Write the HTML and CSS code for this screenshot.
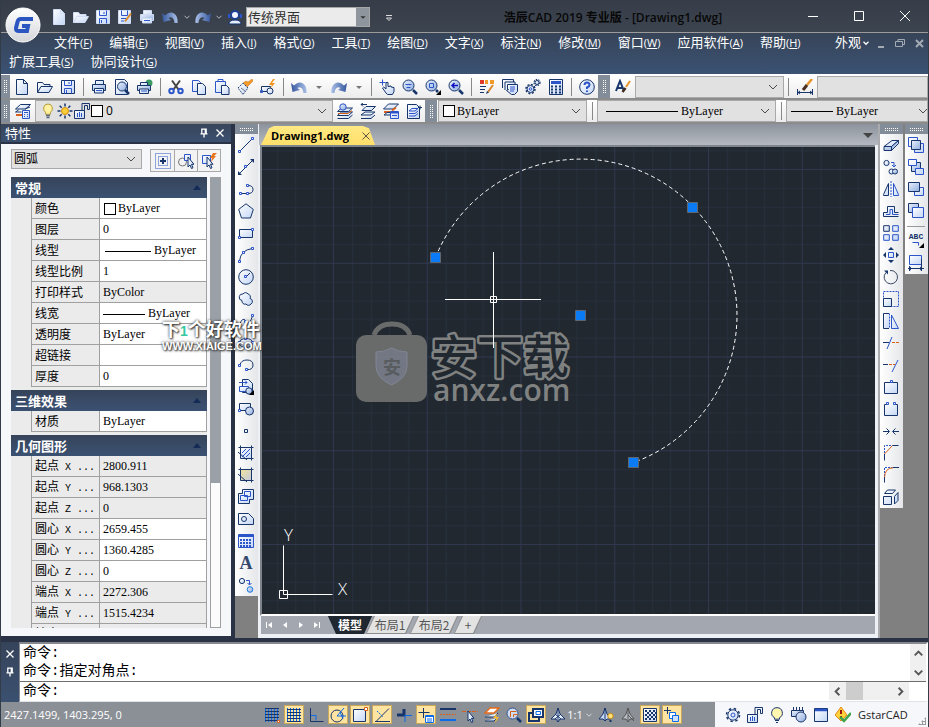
FILE: index.html
```html
<!DOCTYPE html>
<html lang="zh-CN">
<head>
<meta charset="utf-8">
<title>浩辰CAD 2019 专业版</title>
<link rel="stylesheet" href="styles.css">
</head>
<body>
<svg class="sprite" aria-hidden="true">
  <defs>
    <linearGradient id="paper" x1="0" y1="0" x2="1" y2="1"><stop offset="0" stop-color="#fff"/><stop offset="1" stop-color="#c3d6f5"/></linearGradient>
    <linearGradient id="deep" x1="0" y1="0" x2="1" y2="1"><stop offset="0" stop-color="#eaf1fc"/><stop offset="1" stop-color="#8fadde"/></linearGradient>
    <linearGradient id="bend" x1="0" y1="0" x2="1" y2="0"><stop offset="0" stop-color="#35579f"/><stop offset="1" stop-color="#a9bfe6"/></linearGradient>
    <linearGradient id="dneb" x1="1" y1="0" x2="0" y2="0"><stop offset="0" stop-color="#35579f"/><stop offset="1" stop-color="#a9bfe6"/></linearGradient>
    <linearGradient id="gold" x1="0" y1="0" x2="1" y2="1"><stop offset="0" stop-color="#f2e29a"/><stop offset="1" stop-color="#c3cbe0"/></linearGradient>
    <linearGradient id="silver" x1="0" y1="0" x2="0" y2="1"><stop offset="0" stop-color="#fff"/><stop offset="1" stop-color="#d4d6da"/></linearGradient>
  </defs>
  <!-- file and edit -->
  <symbol id="new" viewBox="0 0 16 16"><path class="p" d="M2.500.5h7l4 4v11h-11z"/><path d="M9.500.5v4h4"/></symbol>
  <symbol id="open" viewBox="0 0 16 16"><path class="p" d="M.5 13.500v-10h5l1.500 2h6v3"/><path class="p" d="M.5 13.500l3.500-6h11.500l-3.500 6z"/></symbol>
  <symbol id="save" viewBox="0 0 16 16"><path class="p" d="M1.500 1.500h13v13h-13z"/><path class="b" d="M4.500 1.500v5h7v-5M4.500 14.500v-5h7v5M9 3v2M6.500 11v3"/></symbol>
  <symbol id="saveas" viewBox="0 0 16 16"><path class="p" d="M1.500 1.500h12v13h-12z"/><path class="b" d="M4.500 1.500v5h6v-5M4 9.500h5M4 12h3"/><path class="tan" d="M14 4.500l-6 8"/><path class="s" d="M6.500 15l.5-3 2 1.500z"/></symbol>
  <symbol id="print" viewBox="0 0 16 16"><path class="p" d="M4.500 6v-4.500h8v4.500"/><path class="d" d="M1.500 5.500h13v6h-13z"/><path class="p" d="M3.500 9.500h9v4.500h-9z"/><path class="b" d="M5 11.500h6"/></symbol>
  <symbol id="publish" viewBox="0 0 16 16"><circle cx="12" cy="4" r="3.500" fill="#3c9b62" stroke="none"/><path class="p" d="M3.500 7v-3.500h7v3.500"/><path class="d" d="M.5 6.500h13v5h-13z"/><path class="p" d="M2.500 10h9v4.500h-9z"/><path class="b" d="M4 12h6"/></symbol>
  <symbol id="preview" viewBox="0 0 16 16"><path class="p" d="M1.500.5h9l3 3v12h-12z"/><circle class="d" cx="8" cy="7.500" r="4.500"/><path class="w3" d="M11 11l4 4"/></symbol>
  <symbol id="cut" viewBox="0 0 16 16"><path stroke="#444" stroke-width="2" d="M4 1.500l6.500 9M12 1.500l-6.500 9"/><g class="b w2"><circle cx="3.500" cy="12" r="2.200"/><circle cx="12.500" cy="12" r="2.200"/></g></symbol>
  <symbol id="copy" viewBox="0 0 16 16"><path class="p b" d="M1.500 1.500h6l2 2v9h-8z"/><path class="p" d="M6.500 4.500h5l3 3v8h-8z"/></symbol>
  <symbol id="paste" viewBox="0 0 16 16"><path class="p b" d="M1.500 2.500h10v11h-10z"/><path class="b" d="M4 2.500v-2h5v2z"/><path class="p" d="M7.500 6.500h5l2.500 2.500v6.500h-7.500z"/></symbol>
  <symbol id="brush" viewBox="0 0 16 16"><path d="M15 0l1 2-6 6-4-4 3-2 2 1z" fill="#f39b2c" stroke="#c46a10" stroke-width=".5"/><path class="p" d="M1 9l5-5 5 5-5 6.500z" stroke-dasharray="1.500 1"/><path d="M4 9l4 3" stroke="#777"/></symbol>
  <symbol id="bedit" viewBox="0 0 16 16"><path class="p" d="M1.500 7.500h9v5h-9z"/><circle class="p" cx="10" cy="12" r="3"/><path class="b" d="M.5 11.500h2v2h-2z"/><path fill="#f2941d" stroke="none" d="M13 0l-4 6h3l-2 4 5-6h-3l3-4z"/></symbol>
  <symbol id="undo" viewBox="0 0 16 16"><path d="M0 4l1.500 9 7.500-2-2.500-2c3-2 5.500 0 6 5h3c1-9-6-14-12.500-7.500z" fill="url(#bend)" stroke="none"/></symbol>
  <symbol id="redo" viewBox="0 0 16 16"><path d="M16 4l-1.500 9-7.500-2 2.500-2c-3-2-5.500 0-6 5h-3c-1-9 6-14 12.500-7.500z" fill="url(#dneb)" stroke="none"/></symbol>
  <symbol id="support" viewBox="0 0 16 16"><circle cx="8" cy="6" r="4" fill="#f4f7ff" stroke="#1f3f94" stroke-width="2"/><path class="sb" d="M1 5h2v4h-2zM13 5h2v4h-2z"/><path d="M2 15q0-4 6-4t6 4z" fill="#e5edfc" stroke="#10306e"/></symbol>
  <!-- view -->
  <symbol id="pan" viewBox="0 0 16 16"><path class="b" d="M3.500.5v6M.5 3.500h6"/><path class="p" d="M7 14l-3.500-5 1.200-1 2.300 2v-6.500h2v4h1.500v-.5h1.500v1h1.500v.5h1.500v4l-1.500 3h-5z"/></symbol>
  <symbol id="zoomrt" viewBox="0 0 16 16"><circle class="d" cx="6.500" cy="6.500" r="5.500"/><path class="b" d="M3.500 5.500h6M4.500 8.500h4"/><path class="w3" d="M11 11l4 4"/></symbol>
  <symbol id="zoomwin" viewBox="0 0 16 16"><circle class="d" cx="6.500" cy="6.500" r="5.500"/><path class="b" d="M4.500 4.500h4v4h-4z"/><path class="w3" d="M11 11l2 2"/><path fill="#000" stroke="none" d="M16 11v5h-5z"/></symbol>
  <symbol id="zoomprev" viewBox="0 0 16 16"><circle class="d" cx="6.500" cy="6.500" r="5.500"/><path stroke="#1010c0" stroke-width="1.500" d="M10 6.500h-6M6.500 4l-2.500 2.500 2.500 2.500"/><path class="w3" d="M11 11l4 4"/></symbol>
  <symbol id="palette" viewBox="0 0 16 16"><path fill="#e03a2a" stroke="none" d="M1 1h4v4h-4z"/><path fill="#f09b2c" stroke="none" d="M6 1h3v4h-3zM11 1h4v4h-4z"/><path d="M1 7.500h6M1 10.500h5M1 13.500h4"/><path class="tan" d="M14 6l-5 7"/><path class="s" d="M7 15l1-3 2 1.500z"/></symbol>
  <symbol id="sheets" viewBox="0 0 16 16"><path class="p" d="M.5 9v-8.500h11v3"/><path class="p" d="M3 11v-8h10v3"/><path class="p" d="M5.500 5.500h10v7l-3 3h-3l-5-4 2-1h-1z"/><path class="b" d="M8 8h5M8 10h5M8 12h4"/></symbol>
  <symbol id="gears" viewBox="0 0 16 16"><circle cx="5.500" cy="10" r="4.500" stroke-width="1.500" stroke-dasharray="2 1.500"/><circle class="p" cx="5.500" cy="10" r="3.500"/><circle class="b" cx="5.500" cy="10" r="1.300"/><circle cx="12" cy="3.500" r="3" stroke-width="1.200" stroke-dasharray="1.500 1"/><circle class="p" cx="12" cy="3.500" r="2"/></symbol>
  <symbol id="calc" viewBox="0 0 16 16"><path class="p" d="M1.500.5h13v15h-13z"/><path class="sb" d="M3 2h10v3h-10z"/><path d="M3 7.500h10M3 10.500h10M3 13.500h10" stroke-width="2" stroke-dasharray="2 2"/></symbol>
  <symbol id="help" viewBox="0 0 16 16"><circle class="p" cx="8" cy="8" r="7.300"/><path class="b w2" d="M5.500 6q0-2.500 2.500-2.500t2.500 2.500q0 1.500-2.500 2.500v1.500M8 11.500v1.500"/></symbol>
  <symbol id="tstyle" viewBox="0 0 16 16"><path class="w2" d="M1 12l4-10 4 10M2.500 9h5"/><path stroke="#e7962e" stroke-width="2" d="M15 2l-4 6"/><path stroke="#3d2b20" stroke-width="2.500" d="M10.500 9l-3 4"/></symbol>
  <symbol id="dstyle" viewBox="0 0 16 16"><path stroke="#e7962e" stroke-width="2.500" d="M15 0l-5 6"/><path stroke="#4a3020" stroke-width="3" d="M10 6l-4 5"/><path d="M.5 10v6M15.500 10v6M.5 13.500h15M3 12l-2 1.500 2 1.500M13 12l2 1.500-2 1.500"/></symbol>
  <!-- layers -->
  <symbol id="layers" viewBox="0 0 16 16"><path class="p" d="M.5 6l5-4.500h10l-5 4.500z"/><path d="M.5 9l3-2M.5 9h6M10 6l5-2"/><path class="o w2" d="M1 12h6"/><path class="p b" d="M7.500 7.500h7v8h-7z"/><path class="b" d="M9 9.500h4M9 11.500h1M12 11.500h1M9 13.500h1M12 13.500h1"/></symbol>
  <symbol id="laycur" viewBox="0 0 16 16"><path class="p" d="M.5 12.500l4-3.500h11l-4 3.500zM.5 15.500h11l4-3.500"/><path class="p" d="M.5 8.500l4-3.500h11l-4 3.500z"/><path class="o" d="M1 10.500h10l4-3"/><circle class="d b" cx="6" cy="4" r="3.200"/></symbol>
  <symbol id="layprev" viewBox="0 0 16 16"><path class="p" d="M1 12l4-3h10l-4 3zM1 15.500h10l4-3.500"/><path class="p" d="M2 7.500l4-4h9.500l-4 4z"/><path d="M7 1.500h-6M3 0l-2 1.500 2 2"/></symbol>
  <symbol id="laystate" viewBox="0 0 16 16"><path class="p" d="M.5 6l5-5h10l-5 5z"/><path class="o w2" d="M1 9h7M9 7.500l4-3"/><path class="p" d="M1 12l3-2.500h5v2.500z"/><path class="p b" d="M7.500 8.500h8v7h-8z"/><path class="b w2" d="M8 9.500h7"/><path class="b" d="M9 12.500h5"/></symbol>
  <symbol id="laywalk" viewBox="0 0 16 16"><path class="p" d="M1.500 1.500h9l3 3v11h-12z"/><path class="p b" d="M3 8l3-2.500h6l-3 2.500zM3 10.500h6l3-2.500M3 13h6l3-2.500"/><path d="M12 4.500h4M14 2.500v4"/></symbol>
  <symbol id="bulb" viewBox="0 0 16 16"><path d="M8 1a4.500 4.500 0 0 1 2.500 8.200v2h-5v-2a4.500 4.500 0 0 1 2.500-8.200z" fill="#fff2a0" stroke="#b39a3a"/><path d="M6 12.500h4M6.500 14.500h3" stroke="#5a6478" stroke-width="1.500"/></symbol>
  <symbol id="sun" viewBox="0 0 16 16"><path d="M8 .5v3M8 12.500v3M.5 8h3M12.500 8h3M2.700 2.700l2 2M11.300 11.300l2 2M13.300 2.700l-2 2M4.700 11.300l-2 2" stroke-width="1.500"/><circle cx="8" cy="8" r="3.500" fill="#f7cf3a" stroke="#d58d10"/></symbol>
  <symbol id="unlock" viewBox="0 0 16 16"><path class="p" d="M.5 7.500h10v8h-10z"/><path class="b" d="M3.500 10v4M5.500 9v5M7.500 10v4"/><path d="M8 7.500v-7h7.500v6h-2v-4h-3v5"/></symbol>
  <!-- draw -->
  <symbol id="line" viewBox="0 0 16 16"><path d="M2 14l12-12"/><path class="h" d="M.5 13.500h2v2h-2zM13.500.5h2v2h-2z"/></symbol>
  <symbol id="xline" viewBox="0 0 16 16"><path d="M1 15l14-14"/><path class="s" d="M0 16v-4l4 4zM16 0v4l-4-4z"/><path class="h" d="M6.500 6.500h2v2h-2z"/></symbol>
  <symbol id="pline" viewBox="0 0 16 16"><path d="M3 12.500h6M10 4.500q5 0 5 4t-5 4"/><path class="h" d="M1.500 11.500h2v2h-2zM8.500 11.500h2v2h-2zM8.500 3.500h2v2h-2z"/></symbol>
  <symbol id="polygon" viewBox="0 0 16 16"><path class="p" d="M8 .8l7.300 5.600-2.800 8.600h-9l-2.800-8.600z"/></symbol>
  <symbol id="rect" viewBox="0 0 16 16"><path class="p" d="M1.500 4.500h13v8h-13z"/><path class="h" d="M.5 11.500h2v2h-2zM13.500 3.500h2v2h-2z"/></symbol>
  <symbol id="arc" viewBox="0 0 16 16"><path d="M1.500 14q1-11 13-12.500"/><path class="h" d="M.5 13.500h2v2h-2zM4.500 4.500h2v2h-2zM13.500.5h2v2h-2z"/></symbol>
  <symbol id="circle" viewBox="0 0 16 16"><circle class="p" cx="8" cy="8" r="7.300"/><path d="M8 8l4-4"/><path class="h" d="M6.500 6.500h2v2h-2z"/></symbol>
  <symbol id="cloud" viewBox="0 0 16 16"><path class="p" d="M5 3a3 3 0 0 1 5 0 3 3 0 0 1 2 4.500 3 3 0 0 1 1 5.500 3 3 0 0 1-5 0 3 3 0 0 1-4-3.500 3 3 0 1 1 1-6.500z"/></symbol>
  <symbol id="spline" viewBox="0 0 16 16"><path d="M1.500 12q3-9 6.500-4t6.500-5"/><path class="h" d="M.5 12.500h2v2h-2zM6.500 7.500h2v2h-2zM13.500 1.500h2v2h-2z"/></symbol>
  <symbol id="ellipse" viewBox="0 0 16 16"><ellipse class="p" cx="8" cy="8" rx="7" ry="4.500"/><path class="h" d="M6.500 2.500h2v2h-2zM.5 6.500h2v2h-2zM13.500 6.500h2v2h-2zM6.500 11.500h2v2h-2z"/></symbol>
  <symbol id="earc" viewBox="0 0 16 16"><path d="M2 8q1-5 7-5t6 5-6 4.500"/><path class="h" d="M.5 7.500h2v2h-2zM7.500 11.500h2v2h-2z"/></symbol>
  <symbol id="insert" viewBox="0 0 16 16"><path class="p" d="M4.500.5h6l4 4v9h-10z"/><path class="b" d="M1 3.500h8M7 1.500l2 2-2 2"/><path class="p b" d="M1.500 7.500h9v5h-9z"/><circle class="d" cx="11" cy="12" r="3.200"/><path fill="#000" stroke="none" d="M16 11v5h-5z"/></symbol>
  <symbol id="block" viewBox="0 0 16 16"><path class="p" d="M1.500 2.500h11v7h-11z"/><circle class="d" cx="11.500" cy="10" r="4"/><path class="h" d="M.5 8.500h2v2h-2z"/></symbol>
  <symbol id="point" viewBox="0 0 16 16"><path d="M6.500 6.500h3v3h-3z"/></symbol>
  <symbol id="hatch" viewBox="0 0 16 16"><path class="p" d="M2.500 2.500h11v11h-11z"/><path class="b" d="M4 8l4-4M4 12l8-8M8 12l4-4"/><path d="M.5 2.500h2v-2M15.500 2.500h-2v-2M13.500 15.500v-2h2M0 7l9 8"/></symbol>
  <symbol id="gradient" viewBox="0 0 16 16"><path fill="url(#gold)" d="M2.500 2.500h11v11h-11z"/><path d="M.5 2.500h2v-2M15.500 2.500h-2v-2M13.500 15.500v-2h2M0 7l9 8"/></symbol>
  <symbol id="region" viewBox="0 0 16 16"><path class="p" d="M.5 4.500h4v-4h11v10h-4v4h-11z"/><path class="b" d="M2.500 6.500h7v5h-7zM6.500 2.500h6v5h-6z"/></symbol>
  <symbol id="wipeout" viewBox="0 0 16 16"><path class="p" d="M.5 2.500h10l5 5v6h-15z"/><circle class="p" cx="6" cy="8" r="2.500"/></symbol>
  <symbol id="table" viewBox="0 0 16 16"><path class="p b" d="M.5 1.500h15v13h-15z"/><path class="sb" d="M1 1h14v3h-14z"/><path class="b w2" d="M2 7h12M2 10h12M2 13h12" stroke-dasharray="2 1"/></symbol>
  <symbol id="addsel" viewBox="0 0 16 16"><circle class="p" cx="4" cy="4" r="2.600"/><path class="b" d="M8 3.500h3.500v4M9.500 6l2 2 2-2"/><circle class="d" cx="12" cy="12.500" r="2.800" stroke="#1a78e0"/></symbol>
  <!-- modify -->
  <symbol id="erase" viewBox="0 0 16 16"><path class="p" d="M1 9.500l8-6h6.500l-7 6z"/><path class="d" d="M1 9.500h7.500v4h-7.500zM8.500 9.500l7-6v3l-7 7z"/></symbol>
  <symbol id="copyobj" viewBox="0 0 16 16"><circle class="p" cx="3.500" cy="4" r="2.600"/><path class="b" d="M8 3.500h3v4M9 6l2 2 2-2"/><circle class="p" cx="8.500" cy="12.500" r="2.500"/><circle class="d" cx="12" cy="12.500" r="2.500"/></symbol>
  <symbol id="mirror" viewBox="0 0 16 16"><path class="p" d="M.5 14.500v-1l5-11v12z"/><path class="p b" d="M15.500 14.500v-1l-5-11v12z"/><path class="b" d="M8 0v16" stroke-dasharray="2 1"/></symbol>
  <symbol id="offset" viewBox="0 0 16 16"><path class="p" d="M.5 13.500v-4h4v-6h7v6h4M.5 13.500h15"/><path class="b" d="M3 11.500h4v-5h2.500v5h6"/></symbol>
  <symbol id="array" viewBox="0 0 16 16"><path class="p" d="M.7.700h5.600v5.600h-5.600z"/><path class="p b" d="M9.700.700h5.600v5.600h-5.600zM.7 9.700h5.600v5.600h-5.600zM9.700 9.700h5.600v5.600h-5.600z"/></symbol>
  <symbol id="move" viewBox="0 0 16 16"><path class="p b" d="M5.500 5.500h5v5h-5z"/><path class="s" d="M8 0l3 3h-6zM8 16l3-3h-6zM0 8l3-3v6zM16 8l-3-3v6z"/></symbol>
  <symbol id="rotate" viewBox="0 0 16 16"><path d="M3 3.500a6.700 6.700 0 1 0 4-2" stroke="#3c4a66"/><path class="s" d="M1 1.500h4v4z"/></symbol>
  <symbol id="scale" viewBox="0 0 16 16"><path class="b" d="M.5.500h15v15h-15z" stroke-dasharray="2 1"/><path class="p" d="M.5 7.500h8v8h-8z"/></symbol>
  <symbol id="stretch" viewBox="0 0 16 16"><path class="p" d="M6 15.500h-5.500v-15h5.500"/><path class="b" d="M6.500.500v15" stroke-dasharray="2 1"/><path class="p b" d="M8.500 2v13.500h7z"/></symbol>
  <symbol id="trim" viewBox="0 0 16 16"><path class="b" d="M4 14l5-12"/><path d="M0 7.500h6"/><path class="o" d="M9 7.500h7" stroke-dasharray="3 1"/></symbol>
  <symbol id="extend" viewBox="0 0 16 16"><path class="b" d="M9 15l6-12"/><path d="M0 7.500h5"/><path class="o" d="M6 7.500h6" stroke-dasharray="3 1"/></symbol>
  <symbol id="breakpt" viewBox="0 0 16 16"><path class="p" d="M1.500 3.500h13v11h-13z"/><path class="h" d="M7.500 1.500h2v2h-2z"/></symbol>
  <symbol id="break" viewBox="0 0 16 16"><path class="p" d="M4 3.500h-2.500v11h13v-11h-2"/><path class="h" d="M3.500 1.500h2v2h-2zM10.500 1.500h2v2h-2z"/></symbol>
  <symbol id="join" viewBox="0 0 16 16"><path d="M0 8.500h6M3.500 5.500l3 3-3 3M16 8.500h-6M12.500 5.500l-3 3 3 3"/></symbol>
  <symbol id="chamfer" viewBox="0 0 16 16"><path class="b" d="M1.500 8v-7.500h8" stroke-dasharray="2 1"/><path class="o" d="M1.500 9l8-8.500"/><path d="M1.500 9v6.500M9.500.500h6"/></symbol>
  <symbol id="fillet" viewBox="0 0 16 16"><path class="b" d="M1.500 9v-8.500h8" stroke-dasharray="2 1"/><path class="o" d="M1.500 11q0-10 9-10.300"/><path d="M1.500 10v5.500M10 .5h6"/></symbol>
  <symbol id="explode" viewBox="0 0 16 16"><path class="p" d="M.5 7.500h8v8h-8zM1.500 4.500l3-3.500h8l-3 3.500zM11.500 7.500l3.500-4v8l-3.500 3.500z"/></symbol>
  <!-- draw order -->
  <symbol id="front" viewBox="0 0 16 16"><path class="p b" d="M.5.500h9v9h-9zM6.500 6.500h9v9h-9z"/><path class="d" d="M3.500 3.500h9v9h-9z"/></symbol>
  <symbol id="back" viewBox="0 0 16 16"><path class="d" d="M3.500 3.500h9v9h-9z"/><path class="p b" d="M.5.500h8v6h-8zM7.500 9.500h8v6h-8z"/></symbol>
  <symbol id="above" viewBox="0 0 16 16"><path class="p b" d="M6.500 6.500h9v8h-9z"/><path class="d" d="M.5 1.500h11v9h-11z"/></symbol>
  <symbol id="below" viewBox="0 0 16 16"><path class="d" d="M.5.500h10v9h-10z"/><path class="p b" d="M4.500 4.500h11v10h-11z"/></symbol>
  <symbol id="annoback" viewBox="0 0 16 16"><path class="p b" d="M1.500.5h12v9h-12z"/><path d="M1.500 11v5M13.500 4v12M0 13.500h16M3 12l-2 1.500 2 1.500M12 12l2 1.500-2 1.500"/></symbol>
  <!-- selection -->
  <symbol id="qselect" viewBox="0 0 16 16"><path class="b" d="M.5.500h15v15h-15zM3.500 3.500h9v9h-9z" stroke-dasharray="1 1"/><path class="w2" d="M8 5v6M5 8h6"/></symbol>
  <symbol id="selobj" viewBox="0 0 16 16"><circle cx="4.500" cy="9" r="4" stroke="#777"/><path class="p b" d="M6.500 1.500h6v6h-6z"/><path class="p" d="M10 4v10l2-2 1.500 3.500 1.500-.7-1.500-3.500h2.500z"/></symbol>
  <symbol id="pickadd" viewBox="0 0 16 16"><path class="p b" d="M1.500 2.500h8v8h-8z"/><path class="p" d="M6 4v10l2-2 1.500 3.500 1.500-.7-1.500-3.500h2.500z"/><path fill="#e8741d" stroke="none" d="M12 0l-3 5h2l-1 4 5-6h-2l3-3z"/></symbol>
  <!-- status -->
  <symbol id="snap" viewBox="0 0 16 16"><path d="M1.500 1v14M4.500 1v14M7.500 1v14M10.500 1v14M13.500 1v14" stroke="#0a6bea"/><path d="M1 1.500h14M1 4.500h14M1 7.500h14M1 10.500h14M1 13.500h14"/><path class="o" d="M13.500 13.500h2v2h-2z" fill="#fff"/></symbol>
  <symbol id="grid" viewBox="0 0 16 16"><path d="M1.500 1v14M4.500 1v14M7.500 1v14M10.500 1v14M13.500 1v14" stroke="#0a6bea"/><path d="M1 2.500h14M1 5.500h14M1 8.500h14M1 11.500h14M1 14.500h14"/></symbol>
  <symbol id="ortho" viewBox="0 0 16 16"><path d="M2.500 1v13.500h13"/><path stroke="#0a6bea" d="M3 8.500h5v5"/></symbol>
  <symbol id="polar" viewBox="0 0 16 16"><circle cx="7" cy="9" r="6"/><path d="M7 9l7-8M7 9h9M10 5l3 7" stroke="#0a6bea"/></symbol>
  <symbol id="osnap" viewBox="0 0 16 16"><path class="p" d="M1.500 2.500h12v12h-12z"/><path class="o" d="M12.500.5h3v3h-3z" fill="#fff"/></symbol>
  <symbol id="otrack" viewBox="0 0 16 16"><path d="M2 14.500l13-13M1 14.500h15"/><path d="M3 4l6 6" stroke="#0a6bea" stroke-dasharray="2 1"/></symbol>
  <symbol id="ducs" viewBox="0 0 16 16"><path d="M1 8h7v-6" stroke-width="3"/><path d="M9 8v7M9 8.500h7" stroke="#0a6bea"/></symbol>
  <symbol id="dyn" viewBox="0 0 16 16"><path d="M5.500 1v10M.5 5.500h11"/><path d="M7.500 8.500h8v7h-8z" fill="#fff" stroke="#0a6bea"/><path d="M7.500 9.500h8M9 12h5M9 14h5" stroke="#0a6bea"/></symbol>
  <symbol id="lweight" viewBox="0 0 16 16"><path d="M0 2h16" stroke-width="2"/><path class="o" d="M0 7.500h16" stroke-dasharray="2 1"/><path d="M0 13h16" stroke="#0a6bea" stroke-width="2"/></symbol>
  <symbol id="track" viewBox="0 0 16 16"><path class="o" d="M0 4.500h16" stroke-dasharray="4 1"/><path class="p" d="M6 4v10l2-2 1.500 3.500 1.500-.7-1.500-3.500h2.500z"/></symbol>
  <symbol id="quick" viewBox="0 0 16 16"><path d="M1 6l5-5h9l-5 5z" fill="#fff" stroke="#e36b1e" stroke-width="1.500"/><path class="p" d="M1 10h9l4-4M1 14h9l3-3"/><path d="M13 6l-4 5h3l-1 5 4-6h-3z" fill="#f7b92c" stroke="none"/></symbol>
  <symbol id="magn" viewBox="0 0 16 16"><circle cx="6.500" cy="6.500" r="5.500" fill="#cfdbef" stroke="#35528f"/><path class="o" d="M4.500 10v-5.500h6M7.500 10v-2.500h4"/><path class="w3" d="M11 11l4 4"/></symbol>
  <symbol id="model" viewBox="0 0 16 16"><path d="M5 2h10v8h-10z" fill="#fff" stroke-width="2"/><path stroke="#0a6bea" d="M8 4.500h4.500v3h-4.500z"/><path d="M5 6h-4v8h10v-4" stroke-width="2"/></symbol>
  <symbol id="anno" viewBox="0 0 16 16"><path d="M8 1l2 6 5 5h-5l-2 3-2-3h-5l5-5z" fill="#e8eefb"/><path d="M8 1v14M5 12l6-5M11 12l-6-5"/></symbol>
  <symbol id="annovis" viewBox="0 0 16 16"><path d="M7 1l2 6 4 5h-4l-2 2-2-2h-4l4-5z" fill="#c8d7f4"/><path d="M7 1v12"/><circle cx="12.500" cy="9" r="2.700" fill="#ffe27a" stroke="#c48a1a"/><path d="M11.500 14h2" stroke-width="2"/></symbol>
  <symbol id="annoauto" viewBox="0 0 16 16"><path d="M8 1l2 6 4 5h-4l-2 3-2-3h-4l4-5z" fill="#b7bbc2" stroke="#555"/><path d="M8 1v13M8 8l6 6" stroke="#555"/></symbol>
  <symbol id="checker" viewBox="0 0 16 16"><path class="p" d="M1.500 1.500h13v13h-13z"/><path d="M3 4h10M3 8h10M3 12h10" stroke-width="2" stroke-dasharray="2 2"/><path d="M5 6h9M5 10h9" stroke-width="2" stroke-dasharray="2 2"/></symbol>
  <symbol id="cycle" viewBox="0 0 16 16"><path d="M3.500 0v7M0 3.500h7"/><path d="M5.500 5.500h6v6h-6z" fill="#fff" stroke="#0a6bea"/><path d="M8.500 8.500h6v6h-6z" fill="#cfe0fb" stroke="#0a6bea"/></symbol>
  <symbol id="gear" viewBox="0 0 16 16"><circle cx="8" cy="8" r="6.500" stroke-width="1.500" stroke-dasharray="2.500 2.600"/><circle class="p" cx="8" cy="8" r="5.200"/><circle class="b" cx="8" cy="8" r="2"/></symbol>
  <symbol id="lamp" viewBox="0 0 16 16"><path d="M8 .7a5.300 5.300 0 0 1 2.500 10v1.500h-5v-1.500a5.300 5.300 0 0 1 2.500-10z" fill="#fff6b0"/><path d="M6 13.500h4M7 15.500h2"/></symbol>
  <symbol id="hw" viewBox="0 0 16 16"><path class="d" d="M.5 3.500h12v6h-12z"/><path d="M2.500 0v3M5.500 0v3M8.500 0v3M11.500 0v3"/><circle class="d" cx="10" cy="10" r="5"/></symbol>
  <symbol id="fullscr" viewBox="0 0 16 16"><path class="p" d="M1.500 1.500h13v13h-13z"/><path class="b w3" d="M2 3h12"/></symbol>
  <symbol id="warn" viewBox="0 0 16 16"><path d="M6 0l6 8-6 6-6-6z" fill="#ffd23c" stroke="#e8871c"/><path class="w2" d="M6 3v4M6 9v1" stroke="#9c1010"/><path d="M5 10l4 4 7-8" stroke="#3fa44a" stroke-width="2.500"/></symbol>
  <!-- chrome -->
  <symbol id="down" viewBox="0 0 16 16"><path d="M4 6l4 4 4-4"/></symbol>
  <symbol id="up" viewBox="0 0 16 16"><path d="M4 10l4-4 4 4"/></symbol>
  <symbol id="prev" viewBox="0 0 16 16"><path d="M10 4l-4 4 4 4"/></symbol>
  <symbol id="next" viewBox="0 0 16 16"><path d="M6 4l4 4-4 4"/></symbol>
  <symbol id="x" viewBox="0 0 16 16"><path d="M4 4l8 8M12 4l-8 8"/></symbol>
  <symbol id="pin" viewBox="0 0 16 16"><path d="M5.500 9v-5.500h5v5.500M4 9h8M8 9v4M9.500 3.500v5"/></symbol>
  <symbol id="caret" viewBox="0 0 16 16"><path fill="currentColor" stroke="none" d="M5 7h6l-3 3z"/></symbol>
</svg>

<div class="app">
  <a class="logo" href="#" aria-label="浩辰CAD">
    <svg viewBox="0 0 36 36"><circle cx="18" cy="18" r="17" fill="url(#silver)" stroke="#fff"/><path d="M28 12h-12q-3 0-3.500 3l-1.500 6q-.5 3 3 3h8l1-5h-6" fill="none" stroke="#2b55c0" stroke-width="4"/></svg>
  </a>
  <header class="title">
    <div class="quick">
      <button aria-label="新建"><svg class="i"><use href="#new"/></svg></button>
      <button aria-label="打开"><svg class="i"><use href="#open"/></svg></button>
      <button aria-label="保存"><svg class="i"><use href="#save"/></svg></button>
      <button aria-label="另存为"><svg class="i"><use href="#saveas"/></svg></button>
      <button aria-label="打印"><svg class="i"><use href="#print"/></svg></button>
      <button class="wide" aria-label="放弃"><svg class="i"><use href="#undo"/></svg></button>
      <button class="mini" aria-label="放弃列表"><svg class="i c"><use href="#down"/></svg></button>
      <button aria-label="重做"><svg class="i"><use href="#redo"/></svg></button>
      <button class="mini" aria-label="重做列表"><svg class="i c"><use href="#down"/></svg></button>
      <button aria-label="客服"><svg class="i"><use href="#support"/></svg></button>
    </div>
    <div class="workspace">
      <select aria-label="工作空间"><option>传统界面</option></select>
      <span class="drop"><svg class="i"><use href="#caret"/></svg></span>
    </div>
    <button class="more" aria-label="自定义"><svg viewBox="0 0 8 8"><path d="M1 1.500h6M1.500 4h5l-2.500 2.500z"/></svg></button>
    <h1>浩辰CAD 2019 专业版 - [Drawing1.dwg]</h1>
    <div class="winbtns">
      <button aria-label="最小化"><svg viewBox="0 0 16 16"><path d="M3 8.500h10"/></svg></button>
      <button aria-label="最大化"><svg viewBox="0 0 16 16"><path d="M3.500 3.500h9v9h-9z"/></svg></button>
      <button aria-label="关闭"><svg viewBox="0 0 16 16"><path d="M3 3l10 10M13 3l-10 10"/></svg></button>
    </div>
  </header>

  <nav class="menu">
    <div class="mrow first">
      <a href="#">文件<small>(<u>F</u>)</small></a>
      <a href="#">编辑<small>(<u>E</u>)</small></a>
      <a href="#">视图<small>(<u>V</u>)</small></a>
      <a href="#">插入<small>(<u>I</u>)</small></a>
      <a href="#">格式<small>(<u>O</u>)</small></a>
      <a href="#">工具<small>(<u>T</u>)</small></a>
      <a href="#">绘图<small>(<u>D</u>)</small></a>
      <a href="#">文字<small>(<u>X</u>)</small></a>
      <a href="#">标注<small>(<u>N</u>)</small></a>
      <a href="#">修改<small>(<u>M</u>)</small></a>
      <a href="#">窗口<small>(<u>W</u>)</small></a>
      <a href="#">应用软件<small>(<u>A</u>)</small></a>
      <a href="#">帮助<small>(<u>H</u>)</small></a>
      <span class="docbtns">
        <button class="look">外观<svg class="i"><use href="#down"/></svg></button>
        <button aria-label="最小化文档"><svg viewBox="0 0 16 16"><path d="M5 12h6"/></svg></button>
        <button aria-label="还原文档"><svg class="thin" viewBox="0 0 16 16"><path d="M3.500 6.500h7v5h-7zM6 6v-1.500h6.500v5h-2"/></svg></button>
        <button aria-label="关闭文档"><svg viewBox="0 0 16 16"><path d="M5 5l7 7M12 5l-7 7"/></svg></button>
      </span>
    </div>
    <div class="mrow">
      <a href="#">扩展工具<small>(<u>S</u>)</small></a>
      <a href="#">协同设计<small>(<u>G</u>)</small></a>
    </div>
  </nav>

  <div class="bar std">
    <span class="grip"></span>
    <button aria-label="新建"><svg class="i"><use href="#new"/></svg></button>
    <button aria-label="打开"><svg class="i"><use href="#open"/></svg></button>
    <button aria-label="保存"><svg class="i"><use href="#save"/></svg></button>
    <span class="sep"></span>
    <button aria-label="打印"><svg class="i"><use href="#print"/></svg></button>
    <button aria-label="打印预览"><svg class="i"><use href="#preview"/></svg></button>
    <button aria-label="发布"><svg class="i"><use href="#publish"/></svg></button>
    <span class="sep"></span>
    <button aria-label="剪切"><svg class="i"><use href="#cut"/></svg></button>
    <button aria-label="复制"><svg class="i"><use href="#copy"/></svg></button>
    <button aria-label="粘贴"><svg class="i"><use href="#paste"/></svg></button>
    <button aria-label="特性匹配"><svg class="i"><use href="#brush"/></svg></button>
    <button aria-label="块编辑器"><svg class="i"><use href="#bedit"/></svg></button>
    <span class="sep"></span>
    <button aria-label="放弃"><svg class="i"><use href="#undo"/></svg></button>
    <button class="mini" aria-label="放弃列表"><svg class="i"><use href="#caret"/></svg></button>
    <button aria-label="重做"><svg class="i"><use href="#redo"/></svg></button>
    <button class="mini" aria-label="重做列表"><svg class="i"><use href="#caret"/></svg></button>
    <span class="sep"></span>
    <button aria-label="平移"><svg class="i"><use href="#pan"/></svg></button>
    <button aria-label="实时缩放"><svg class="i"><use href="#zoomrt"/></svg></button>
    <button aria-label="窗口缩放"><svg class="i"><use href="#zoomwin"/></svg></button>
    <button aria-label="缩放上一个"><svg class="i"><use href="#zoomprev"/></svg></button>
    <span class="sep"></span>
    <button aria-label="特性"><svg class="i"><use href="#palette"/></svg></button>
    <button aria-label="图纸集"><svg class="i"><use href="#sheets"/></svg></button>
    <button aria-label="设置"><svg class="i"><use href="#gears"/></svg></button>
    <button aria-label="计算器"><svg class="i"><use href="#calc"/></svg></button>
    <span class="sep"></span>
    <button aria-label="帮助"><svg class="i"><use href="#help"/></svg></button>
    <span class="grip wide"></span>
    <button class="dim" aria-label="文字样式管理"><svg class="i"><use href="#tstyle"/></svg></button>
    <div class="combo c-text"><select aria-label="文字样式"><option></option></select><svg class="i v"><use href="#down"/></svg></div>
    <span class="sep"></span>
    <button class="dim" aria-label="标注样式管理"><svg class="i"><use href="#dstyle"/></svg></button>
    <div class="combo grow"><select aria-label="标注样式"><option></option></select></div>
  </div>

  <div class="bar props">
    <span class="grip"></span>
    <button class="dim" aria-label="图层特性"><svg class="i"><use href="#layers"/></svg></button>
    <div class="combo c-layer">
      <svg class="i"><use href="#bulb"/></svg><svg class="i"><use href="#sun"/></svg><svg class="i"><use href="#unlock"/></svg><span class="swatch"></span>
      <select aria-label="图层"><option>0</option></select><svg class="i v"><use href="#down"/></svg>
    </div>
    <button aria-label="置为当前"><svg class="i"><use href="#laycur"/></svg></button>
    <button aria-label="上一图层"><svg class="i"><use href="#layprev"/></svg></button>
    <button aria-label="图层状态"><svg class="i"><use href="#laystate"/></svg></button>
    <button aria-label="图层漫游"><svg class="i"><use href="#laywalk"/></svg></button>
    <span class="grip wide"></span>
    <div class="combo c-color"><span class="swatch"></span><select class="song" aria-label="颜色"><option>ByLayer</option></select><svg class="i v"><use href="#down"/></svg></div>
    <span class="sep"></span>
    <div class="combo c-ltype"><span class="rule"></span><select class="song" aria-label="线型"><option>ByLayer</option></select><svg class="i v"><use href="#down"/></svg></div>
    <span class="sep"></span>
    <div class="combo grow c-lw"><span class="rule short"></span><select class="song" aria-label="线宽"><option>ByLayer</option></select><svg class="i v"><use href="#down"/></svg></div>
  </div>

  <main class="work">
    <aside class="panel">
      <div class="phead"><h2>特性</h2><button aria-label="自动隐藏"><svg class="i"><use href="#pin"/></svg></button><button aria-label="关闭"><svg class="i"><use href="#x"/></svg></button></div>
      <div class="psel">
        <div class="combo"><select aria-label="对象类型"><option>圆弧</option></select><svg class="i v"><use href="#down"/></svg></div>
        <div class="ptools">
          <button aria-label="快速选择"><svg class="i"><use href="#qselect"/></svg></button>
          <button aria-label="选择对象"><svg class="i"><use href="#selobj"/></svg></button>
          <button aria-label="切换选择方式"><svg class="i"><use href="#pickadd"/></svg></button>
        </div>
      </div>
      <div class="plist">
        <div class="pscroll">
          <h3><button>常规<svg viewBox="0 0 8 5"><path d="M4 0l4 5h-8z"/></svg></button></h3>
          <table>
            <tr><th>颜色</th><td><span class="swatch"></span>ByLayer</td></tr>
            <tr><th>图层</th><td>0</td></tr>
            <tr><th>线型</th><td><span class="rule"></span>ByLayer</td></tr>
            <tr><th>线型比例</th><td>1</td></tr>
            <tr class="ro"><th>打印样式</th><td>ByColor</td></tr>
            <tr><th>线宽</th><td><span class="rule short"></span>ByLayer</td></tr>
            <tr><th>透明度</th><td>ByLayer</td></tr>
            <tr><th>超链接</th><td></td></tr>
            <tr><th>厚度</th><td>0</td></tr>
          </table>
          <h3><button>三维效果<svg viewBox="0 0 8 5"><path d="M4 0l4 5h-8z"/></svg></button></h3>
          <table>
            <tr><th>材质</th><td>ByLayer</td></tr>
          </table>
          <h3><button>几何图形<svg viewBox="0 0 8 5"><path d="M4 0l4 5h-8z"/></svg></button></h3>
          <table>
            <tr class="ro"><th>起点<span> X ...</span></th><td>2800.911</td></tr>
            <tr class="ro"><th>起点<span> Y ...</span></th><td>968.1303</td></tr>
            <tr class="ro"><th>起点<span> Z ...</span></th><td>0</td></tr>
            <tr><th>圆心<span> X ...</span></th><td>2659.455</td></tr>
            <tr><th>圆心<span> Y ...</span></th><td>1360.4285</td></tr>
            <tr><th>圆心<span> Z ...</span></th><td>0</td></tr>
            <tr class="ro"><th>端点<span> X ...</span></th><td>2272.306</td></tr>
            <tr class="ro"><th>端点<span> Y ...</span></th><td>1515.4234</td></tr>
            <tr class="ro"><th>端点<span> Z ...</span></th><td>0</td></tr>
          </table>
        </div>
        <div class="pbar"><div class="pthumb"></div></div>
      </div>
      <div class="wm-site" aria-hidden="true"><b>下<i>1</i>个好软件</b><span>WWW.XIAIGE.COM</span></div>
    </aside>

    <div class="vbar">
      <span class="hgrip"></span>
      <button aria-label="直线"><svg class="i"><use href="#line"/></svg></button>
      <button aria-label="构造线"><svg class="i"><use href="#xline"/></svg></button>
      <button aria-label="多段线"><svg class="i"><use href="#pline"/></svg></button>
      <button aria-label="正多边形"><svg class="i"><use href="#polygon"/></svg></button>
      <button aria-label="矩形"><svg class="i"><use href="#rect"/></svg></button>
      <button aria-label="圆弧"><svg class="i"><use href="#arc"/></svg></button>
      <button aria-label="圆"><svg class="i"><use href="#circle"/></svg></button>
      <button aria-label="修订云线"><svg class="i"><use href="#cloud"/></svg></button>
      <button aria-label="样条曲线"><svg class="i"><use href="#spline"/></svg></button>
      <button aria-label="椭圆"><svg class="i"><use href="#ellipse"/></svg></button>
      <button aria-label="椭圆弧"><svg class="i"><use href="#earc"/></svg></button>
      <button aria-label="插入块"><svg class="i"><use href="#insert"/></svg></button>
      <button aria-label="创建块"><svg class="i"><use href="#block"/></svg></button>
      <button aria-label="点"><svg class="i"><use href="#point"/></svg></button>
      <button aria-label="图案填充"><svg class="i"><use href="#hatch"/></svg></button>
      <button aria-label="渐变色"><svg class="i"><use href="#gradient"/></svg></button>
      <button aria-label="面域"><svg class="i"><use href="#region"/></svg></button>
      <button aria-label="区域覆盖"><svg class="i"><use href="#wipeout"/></svg></button>
      <button aria-label="表格"><svg class="i"><use href="#table"/></svg></button>
      <button class="glyph" aria-label="多行文字">A</button>
      <button aria-label="添加选定对象"><svg class="i"><use href="#addsel"/></svg></button>
    </div>

    <section class="doc">
      <div class="tabs">
        <div class="tab"><span>Drawing1.dwg</span><button aria-label="关闭图形"><svg class="i"><use href="#x"/></svg></button></div>
        <button class="tablist" aria-label="图形列表"><svg viewBox="0 0 10 5"><path d="M0 0h10l-5 5z"/></svg></button>
      </div>
      <div class="canvas">
        <svg class="scene" role="img" aria-label="绘图区">
          <defs>
            <pattern id="mesh" x="71" y="22" width="93.750" height="93.750" patternUnits="userSpaceOnUse">
              <path d="M19 0v94M38 0v94M56 0v94M75 0v94M0 19h94M0 38h94M0 56h94M0 75h94" transform="translate(.5 .5)" stroke="#262f3b" fill="none"/>
              <path d="M.5 0v94M0 .5h94" stroke="#303850" fill="none"/>
            </pattern>
          </defs>
          <rect width="100%" height="100%" fill="#212830"/>
          <rect width="100%" height="100%" fill="url(#mesh)" shape-rendering="crispEdges"/>
          <g class="wm">
            <path d="M112 188q4-11 18-11t18 11" fill="none" stroke="#6d6f6e" stroke-width="5"/>
            <rect x="94" y="188" width="71" height="67" rx="10" fill="#6d6f6e"/>
            <path d="M114 205q8 0 15.500-4 7.500 4 15.500 4v14q0 12-15.500 19-15.500-7-15.500-19z" fill="#777c88" stroke="#868b98"/>
            <text class="wm-c" x="121" y="227">安</text>
            <text class="wm-a" x="169" y="226">安下载</text>
            <text class="wm-d" x="171" y="254">anxz.com</text>
          </g>
          <path class="ent" d="M173.500 110.500A156.300 156.300 0 1 1 371.500 315.500"/>
          <g class="cross"><path d="M183 152.500h96M231.500 105v96"/><path d="M228.500 149.500h6v6h-6z"/></g>
          <g class="grips"><path d="M168.500 105.500h10v10h-10zM425.500 55.500h10v10h-10zM313.500 163.500h10v10h-10zM366.500 310.500h10v10h-10z"/></g>
          <g class="cross"><path d="M17.500 443.500h8v8h-8zM21.500 447.500v-49M21.500 447.500h49"/></g>
          <text class="axis" x="22" y="394">Y</text>
          <text class="axis" x="76" y="448">X</text>
        </svg>
      </div>
      <div class="sheets">
        <button aria-label="首页"><svg viewBox="0 0 10 10"><path d="M2 2h1v6h-1zM8 2v6l-4-3z"/></svg></button>
        <button aria-label="上一页"><svg viewBox="0 0 10 10"><path d="M7 2v6l-4-3z"/></svg></button>
        <button aria-label="下一页"><svg viewBox="0 0 10 10"><path d="M3 2v6l4-3z"/></svg></button>
        <button aria-label="末页"><svg viewBox="0 0 10 10"><path d="M7 2h1v6h-1zM2 2v6l4-3z"/></svg></button>
        <div class="stabs">
          <button class="on"><span>模型</span></button>
          <button><span>布局1</span></button>
          <button><span>布局2</span></button>
          <button class="add"><span>+</span></button>
        </div>
      </div>
    </section>

    <div class="vbar">
      <span class="hgrip"></span>
      <button aria-label="删除"><svg class="i"><use href="#erase"/></svg></button>
      <button aria-label="复制"><svg class="i"><use href="#copyobj"/></svg></button>
      <button aria-label="镜像"><svg class="i"><use href="#mirror"/></svg></button>
      <button aria-label="偏移"><svg class="i"><use href="#offset"/></svg></button>
      <button aria-label="阵列"><svg class="i"><use href="#array"/></svg></button>
      <button aria-label="移动"><svg class="i"><use href="#move"/></svg></button>
      <button aria-label="旋转"><svg class="i"><use href="#rotate"/></svg></button>
      <button aria-label="缩放"><svg class="i"><use href="#scale"/></svg></button>
      <button aria-label="拉伸"><svg class="i"><use href="#stretch"/></svg></button>
      <button aria-label="修剪"><svg class="i"><use href="#trim"/></svg></button>
      <button aria-label="延伸"><svg class="i"><use href="#extend"/></svg></button>
      <button aria-label="打断于点"><svg class="i"><use href="#breakpt"/></svg></button>
      <button aria-label="打断"><svg class="i"><use href="#break"/></svg></button>
      <button aria-label="合并"><svg class="i"><use href="#join"/></svg></button>
      <button aria-label="倒角"><svg class="i"><use href="#chamfer"/></svg></button>
      <button aria-label="圆角"><svg class="i"><use href="#fillet"/></svg></button>
      <button aria-label="分解"><svg class="i"><use href="#explode"/></svg></button>
    </div>
    <div class="vbar last">
      <span class="hgrip"></span>
      <button aria-label="前置"><svg class="i"><use href="#front"/></svg></button>
      <button aria-label="后置"><svg class="i"><use href="#back"/></svg></button>
      <button aria-label="置于对象之上"><svg class="i"><use href="#above"/></svg></button>
      <button aria-label="置于对象之下"><svg class="i"><use href="#below"/></svg></button>
      <span class="hsep"></span>
      <button class="abc" aria-label="文字前置">ABC<svg viewBox="0 0 16 8"><path class="b" d="M4.500 1.500h6v3"/><path d="M16 2v5h-5z"/></svg></button>
      <button aria-label="注释后置"><svg class="i"><use href="#annoback"/></svg></button>
    </div>
  </main>

  <section class="cmd">
    <div class="cside"><button aria-label="关闭"><svg class="i"><use href="#x"/></svg></button><button aria-label="自动隐藏"><svg class="i"><use href="#pin"/></svg></button></div>
    <div class="cbody">
      <div class="clog"><p>命令:<br>命令:指定对角点:</p>
        <div class="cv"><button aria-label="向上"><svg class="i"><use href="#up"/></svg></button><button aria-label="向下"><svg class="i"><use href="#down"/></svg></button></div>
      </div>
      <div class="cin"><label for="cmdline">命令:</label><input id="cmdline" type="text">
        <div class="ch"><button aria-label="向左"><svg class="i"><use href="#prev"/></svg></button><span></span><button aria-label="向右"><svg class="i"><use href="#next"/></svg></button></div>
      </div>
    </div>
  </section>

  <footer class="status">
    <div class="coords">2427.1499, 1403.295, 0</div>
    <div class="modes">
      <button aria-label="捕捉"><svg class="i"><use href="#snap"/></svg></button>
      <button class="on" aria-label="栅格"><svg class="i"><use href="#grid"/></svg></button>
      <button aria-label="正交"><svg class="i"><use href="#ortho"/></svg></button>
      <button class="on" aria-label="极轴"><svg class="i"><use href="#polar"/></svg></button>
      <button class="on" aria-label="对象捕捉"><svg class="i"><use href="#osnap"/></svg></button>
      <button class="on" aria-label="对象追踪"><svg class="i"><use href="#otrack"/></svg></button>
      <button aria-label="动态UCS"><svg class="i"><use href="#ducs"/></svg></button>
      <button class="on" aria-label="动态输入"><svg class="i"><use href="#dyn"/></svg></button>
      <button aria-label="线宽"><svg class="i"><use href="#lweight"/></svg></button>
      <button aria-label="追踪"><svg class="i"><use href="#track"/></svg></button>
      <button aria-label="快捷特性"><svg class="i"><use href="#quick"/></svg></button>
      <button aria-label="放大"><svg class="i"><use href="#magn"/></svg></button>
      <button class="on" aria-label="模型空间"><svg class="i"><use href="#model"/></svg></button>
      <button class="ratio" aria-label="注释比例"><svg class="i"><use href="#anno"/></svg>1:1<svg class="i c"><use href="#down"/></svg></button>
      <button aria-label="注释可见性"><svg class="i"><use href="#annovis"/></svg></button>
      <button aria-label="自动缩放注释"><svg class="i"><use href="#annoauto"/></svg></button>
      <button class="on" aria-label="透明度"><svg class="i"><use href="#checker"/></svg></button>
      <button class="on" aria-label="选择循环"><svg class="i"><use href="#cycle"/></svg></button>
    </div>
    <div class="tray">
      <button aria-label="设置"><svg class="i"><use href="#gear"/></svg></button>
      <button aria-label="锁定"><svg class="i"><use href="#unlock"/></svg></button>
      <button aria-label="隔离对象"><svg class="i"><use href="#lamp"/></svg></button>
      <button aria-label="硬件加速"><svg class="i"><use href="#hw"/></svg></button>
      <button aria-label="全屏"><svg class="i"><use href="#fullscr"/></svg></button>
      <button aria-label="警告"><svg class="i"><use href="#warn"/></svg></button>
      <span>GstarCAD</span>
      <i class="resize"></i>
    </div>
  </footer>
</div>
</body>
</html>
```

FILE: styles.css
```css
* { box-sizing: border-box; }

:root {
  --o: #17356b;
  --blue: #2b55c8;
  --ui: "Open Sans", "Noto Sans CJK SC", sans-serif;
  --song: "Liberation Serif", "Noto Sans CJK SC", serif;
}

body { margin: 0; font: 13px/20px var(--ui); color: #000; }
button, select, input { font: inherit; color: inherit; margin: 0; padding: 0; border: 0; background: none; border-radius: 0; }
button { display: flex; align-items: center; justify-content: center; flex: none; }
select { appearance: none; }
h1, h2, h3, p { margin: 0; font: inherit; }
a { color: inherit; text-decoration: none; }
svg { display: block; flex: none; }
.sprite { position: absolute; width: 0; height: 0; }

/* icon strokes */
.i { width: 16px; height: 16px; fill: none; stroke: var(--o); overflow: visible; }
.p { fill: url(#paper); }
.d { fill: url(#deep); }
.b { stroke: var(--blue); }
.o { stroke: #d9601a; }
.s { fill: var(--o); stroke: none; }
.sb { fill: var(--blue); stroke: none; }
.h { fill: #fff; stroke: var(--blue); }
.tan { stroke: #d98a2b; stroke-width: 2; }
.w2 { stroke-width: 2; }
.w3 { stroke-width: 2.5; }

.app { position: relative; display: flex; flex-direction: column; height: 100vh; overflow: hidden; border: solid #333c49; border-width: 0 1px; background: #2a3245; }

/* title bar */
.logo { position: absolute; left: 4px; top: 7px; z-index: 2; width: 36px; height: 36px; }
.title { display: flex; align-items: center; flex: none; height: 33px; border-bottom: 1px solid #9b9b9b; background: linear-gradient(#363d48, #3c444f); }
.quick { display: flex; align-items: center; padding: 2px 0 0 47px; --o: #cfdcf3; color: #fff; }
.quick button { width: 22px; height: 30px; }
.quick .wide { width: 24px; }
.quick .mini { width: 10px; }
.quick .c { width: 10px; height: 10px; --o: #fff; }
.workspace { display: flex; align-items: center; width: 124px; height: 20px; margin-top: 2px; border: 1px solid #a6a6a6; background: #ebebeb; }
.workspace select { flex: 1; min-width: 0; padding-left: 1px; font-size: 13px; color: #333; }
.drop { display: flex; align-items: center; justify-content: center; width: 13px; height: 18px; background: #8f959d; color: #333; }
.drop .i { width: 14px; height: 14px; }
.more { width: 38px; height: 32px; padding-top: 4px; }
.more svg { width: 8px; height: 8px; fill: none; stroke: #ddd; }
.title h1 { flex: 1; padding: 3px 0 0 28px; text-align: center; font-size: 12px; font-weight: 600; white-space: nowrap; color: #080808; }
.winbtns { display: flex; }
.winbtns button { width: 46px; height: 32px; }
.winbtns svg { width: 16px; height: 16px; fill: none; stroke: #fff; }

/* menus */
.menu { flex: none; height: 42px; border-bottom: 1px solid #fff; background: linear-gradient(#374458, #3b5273); color: #fff; }
.mrow { display: flex; gap: 17px; height: 19px; padding-left: 8px; line-height: 19px; white-space: nowrap; }
.mrow.first { padding-left: 53px; }
.mrow small { font-size: 11px; }
.docbtns { display: flex; align-items: center; margin-left: auto; }
.docbtns button { width: 19px; height: 19px; }
.docbtns svg { width: 16px; height: 16px; fill: none; stroke: #a4abb5; stroke-width: 2; }
.docbtns .thin { stroke-width: 1; }
.docbtns .look { width: 36px; }
.docbtns .look .i { width: 10px; height: 10px; stroke: #fff; }

/* toolbars */
.bar { display: flex; align-items: center; flex: none; border-bottom: 2px solid #8c8c8c; background: linear-gradient(#fff, #ececec); }
.std { height: 25px; }
.props { height: 24px; }
.bar button { width: 23px; height: 22px; }
.std .mini { width: 17px; color: #777; }
.grip { flex: none; width: 9px; align-self: stretch; background: #838c99; padding: 4px 2px; }
.grip.wide { width: 12px; padding: 4px; }
.grip::before, .hgrip::before { content: ""; display: block; width: 100%; height: 100%; background: linear-gradient(90deg, #838c99 50%, transparent 50%) 0 0 / 2px 2px, linear-gradient(#838c99 50%, #fff 50%) 0 0 / 2px 2px; }
.sep { flex: none; width: 8px; height: 18px; background: linear-gradient(#888, #888) center / 1px 100% no-repeat; }
.props .sep { width: 10px; }
.bar .dim { width: 25px; }
.combo { position: relative; display: flex; align-items: center; flex: none; height: 22px; padding: 0 4px; border: 1px solid #a9a9a9; background: #e1e1e1; }
.combo select { flex: 1; min-width: 0; padding-right: 14px; }
.combo > .v { position: absolute; right: 2px; stroke: #4b4b4b; }
.combo.grow { flex: 1; min-width: 0; }
.song { font: 12px/16px var(--song); }
.swatch { display: inline-block; flex: none; width: 12px; height: 12px; margin-right: 2px; border: 1px solid #000; background: #fff; vertical-align: middle; }
.rule { display: inline-block; flex: none; width: 72px; height: 1px; margin-right: 3px; background: #000; vertical-align: middle; }
.c-text { width: 149px; }
.c-layer { gap: 1px; width: 298px; font-size: 12px; }
.c-color { width: 149px; margin-left: 1px; }
.c-ltype { width: 179px; padding-left: 8px; }
.c-lw > .rule { width: 42px; }
.c-lw > .v { right: -4px; }

/* work area */
.work { display: flex; flex: 1; min-height: 0; background: #808080; }
.panel { position: relative; display: flex; flex-direction: column; flex: none; width: 234px; border-right: 4px solid #2a3245; border-bottom: 2px solid #2a3245; background: #f6f7fb; }
.phead { display: flex; align-items: center; flex: none; height: 20px; padding: 0 3px 0 4px; border-bottom: 2px solid #2a3245; background: linear-gradient(#37455a, #3b5070); color: #fff; --o: #fff; }
.phead h2 { flex: 1; font-size: 13px; line-height: 18px; }
.phead button { width: 16px; height: 16px; }
.phead button .i { width: 14px; height: 14px; stroke-width: 1.5; }
.psel { display: flex; justify-content: space-between; flex: none; padding: 5px 10px; }
.psel .combo { width: 131px; height: 20px; padding: 0 2px; font-size: 12px; }
.ptools { display: flex; border: 1px solid #a9a9a9; background: #f3f3f3; }
.ptools button { width: 23px; height: 21px; }
.ptools button + button { border-left: 1px solid #a9a9a9; }
.plist { display: flex; gap: 3px; flex: 1; min-height: 0; padding: 0 10px 8px; }
.pscroll { flex: 1; min-width: 0; overflow: hidden; background: #ebebeb; }
.pscroll h3 button { width: 100%; height: 21px; justify-content: space-between; padding: 0 6px 0 4px; background: linear-gradient(#36445a, #3b5172); color: #fff; font-size: 13px; line-height: 18px; font-weight: 700; }
.pscroll h3 svg { width: 8px; height: 5px; fill: #142b57; }
.pscroll table { width: calc(100% - 20px); margin: 0 0 3px 20px; border-spacing: 0; table-layout: fixed; font: 12px/16px var(--song); }
.pscroll th, .pscroll td { height: 21px; padding: 0 0 0 3px; border: solid #a0a0a0; border-width: 0 1px 1px 0; text-align: left; font-weight: 400; white-space: nowrap; overflow: hidden; }
.pscroll th { width: 69px; border-left-width: 1px; font-family: "Noto Sans CJK SC", sans-serif; }
.pscroll th span { font: 10px/16px "Liberation Mono", monospace; white-space: pre; }
.pscroll td { background: #fff; }
.pscroll .ro td { background: #ebebeb; }
.pscroll .swatch { margin-left: 1px; }
.pscroll .rule { width: 46px; margin-left: 2px; }
.pscroll .rule.short { width: 42px; margin-left: 0; }
.pbar { flex: none; width: 11px; border: 1px solid #a0a0a0; background: #fbfbfb; }
.pthumb { height: 68%; background: #9aa0a8; }

.wm-site { position: absolute; left: 161px; top: 193px; z-index: 3; width: 100px; color: #fff; text-shadow: 0 0 3px #333, 1px 1px 2px #333; white-space: nowrap; pointer-events: none; }
.wm-site b { display: block; font: 700 18px/22px "Noto Sans CJK SC", sans-serif; }
.wm-site i { font: 700 14px/18px "Liberation Sans", sans-serif; color: #36c9a0; text-shadow: none; }
.wm-site span { display: block; font: 700 11px/12px "Liberation Sans", sans-serif; }

.vbar { display: flex; flex-direction: column; flex: none; align-self: flex-start; width: 23px; background: linear-gradient(90deg, #fff, #e4e6e9); }
.vbar button { width: 22px; height: 22px; }
.vbar.last { margin-left: 2px; }
.vbar .glyph { font: 700 18px/20px "Liberation Serif", serif; color: #35496e; }
.vbar .abc { flex-direction: column; font: 700 8px/8px "Liberation Mono", monospace; color: #17356b; }
.abc svg { width: 16px; height: 8px; }
.abc .b { fill: none; }
.hgrip { height: 10px; padding: 3px 4px; background: #838c99; }
.hsep { height: 8px; background: linear-gradient(#999, #999) center / 80% 1px no-repeat; }

.doc { display: flex; flex-direction: column; flex: 1; min-width: 0; padding-left: 1px; border-right: 2px solid #a9abae; background: #edf0f4; }
.tabs { display: flex; justify-content: space-between; align-items: flex-end; flex: none; height: 21px; background: linear-gradient(#8d939c, #b4b9c1); }
.tab { display: flex; align-items: center; height: 19px; margin-left: 2px; padding: 0 0 0 10px; background: linear-gradient(#ffe983, #ffdf6b); clip-path: polygon(0 100%, 8px 12%, 13px 0, calc(100% - 12px) 0, calc(100% - 6px) 12%, 100% 100%); font: 700 11px/18px "Open Sans", sans-serif; }
.tab button { width: 18px; margin-left: 8px; --o: #444; }
.tab .i { width: 14px; height: 14px; }
.tablist { width: 20px; height: 19px; }
.tablist svg { width: 10px; height: 5px; fill: #444; }
.canvas { flex: 1; min-height: 0; margin: 0 3px 0 1px; border: solid #7e848c; border-width: 2px 0 0 2px; border-bottom: 2px solid #fff; overflow: hidden; }
.scene { width: 100%; height: 100%; }
.ent { fill: none; stroke: #fff; stroke-dasharray: 4 3; }
.cross path { fill: none; stroke: #fff; }
.grips path { fill: #0a7bf5; stroke: #5e6670; }
.axis { font: 300 17px "Open Sans", sans-serif; fill: #fff; }
.wm { opacity: .95; }
.wm text { font-family: "Noto Sans CJK SC", sans-serif; font-weight: 700; }
.wm .wm-c { font-size: 18px; fill: #5b5f62; }
.wm .wm-a { font-size: 46px; font-weight: 500; fill: #212830; stroke: #858786; stroke-width: 5; stroke-linejoin: round; paint-order: stroke; }
.wm .wm-d { font: 600 30px "Open Sans", sans-serif; fill: #858786; }
.sheets { display: flex; align-items: center; flex: none; height: 18px; margin: 0 3px 4px 2px; background: #a2a7b0; }
.sheets > button { width: 16px; height: 18px; }
.sheets > button svg { width: 10px; height: 10px; fill: #fff; }
.stabs { display: flex; padding-left: 3px; font: 12px/16px "Noto Sans CJK SC", sans-serif; }
.stabs button { width: 48px; height: 18px; margin-right: -4px; padding: 0 0 1px; background: #8c8c8c; clip-path: polygon(8px 0, 100% 0, 40px 100%, 0 100%); color: #555; }
.stabs span { display: flex; align-items: center; justify-content: center; width: 100%; height: 17px; background: #e3e3e3; clip-path: polygon(9px 0, 47px 0, 39px 100%, 1px 100%); }
.stabs .on, .stabs .on span { width: 44px; background: #1f2730; color: #fff; font-weight: 700; clip-path: polygon(0 0, 100% 0, 36px 100%, 8px 100%); }
.stabs .on { margin-right: -6px; }
.stabs .add { width: 28px; clip-path: polygon(8px 0, 100% 0, 20px 100%, 0 100%); }
.stabs .add span { clip-path: polygon(9px 0, 27px 0, 19px 100%, 1px 100%); }

/* command line */
.cmd { display: flex; flex: none; height: 64px; border-top: 4px solid #2a3245; }
.cside { display: flex; flex-direction: column; align-items: center; width: 18px; padding-top: 3px; background: linear-gradient(#36445a, #3b5070); --o: #fff; }
.cside button { width: 16px; height: 18px; }
.cside .i { width: 14px; height: 14px; stroke-width: 1.5; }
.cbody { display: flex; flex-direction: column; flex: 1; border: solid #85888d; border-width: 2px 0 0 1px; border-right: 2px solid #fff; border-bottom: 1px solid #e0e3e8; background: #fff; font: 14px/18px "Liberation Mono", "Noto Sans CJK SC", monospace; }
.clog { display: flex; height: 38px; border-bottom: 1px solid #6d6d6d; }
.clog p { flex: 1; padding-left: 3px; }
.cv { display: flex; flex-direction: column; justify-content: space-between; width: 16px; background: #f0f0f0; }
.cv button { width: 16px; height: 18px; }
.cv .i, .ch .i { stroke: #555; stroke-width: 2; width: 15px; height: 15px; }
.cin { display: flex; flex: 1; padding-left: 3px; }
.cin input { flex: 1; min-width: 0; outline: 0; }
.ch { display: flex; width: 80px; height: 18px; margin-right: 17px; background: #f0f0f0; justify-content: space-between; }
.ch button { width: 17px; }
.ch span { width: 17px; margin-right: auto; background: #cdcdcd; }

/* status bar */
.status { display: flex; align-items: center; flex: none; height: 25px; background: #8b9097; }
.coords { flex: 1; padding-left: 3px; font-size: 11px; color: #fff; white-space: nowrap; }
.modes { display: flex; flex: none; margin-right: 33px; gap: 2px; }
.modes button { width: 20px; height: 19px; }
.modes .on { background: #ffe3a0; outline: 1px solid #c9a85a; outline-offset: -1px; }
.modes .ratio { width: 46px; justify-content: space-between; padding-left: 2px; color: #fff; font-size: 11px; }
.ratio .c { width: 10px; height: 10px; stroke: #fff; }
.tray { display: flex; align-items: center; align-self: stretch; flex: none; width: 213px; padding-left: 7px; background: #f6f7fb; font-size: 11px; }
.tray button { width: 22px; height: 22px; }
.tray span { margin-left: 4px; color: #222; }
.resize { align-self: flex-end; width: 8px; height: 8px; margin: 0 2px 2px auto; background: radial-gradient(#999 50%, transparent 50%) 0 0 / 3px 3px; clip-path: polygon(100% 0, 100% 100%, 0 100%); }
```
